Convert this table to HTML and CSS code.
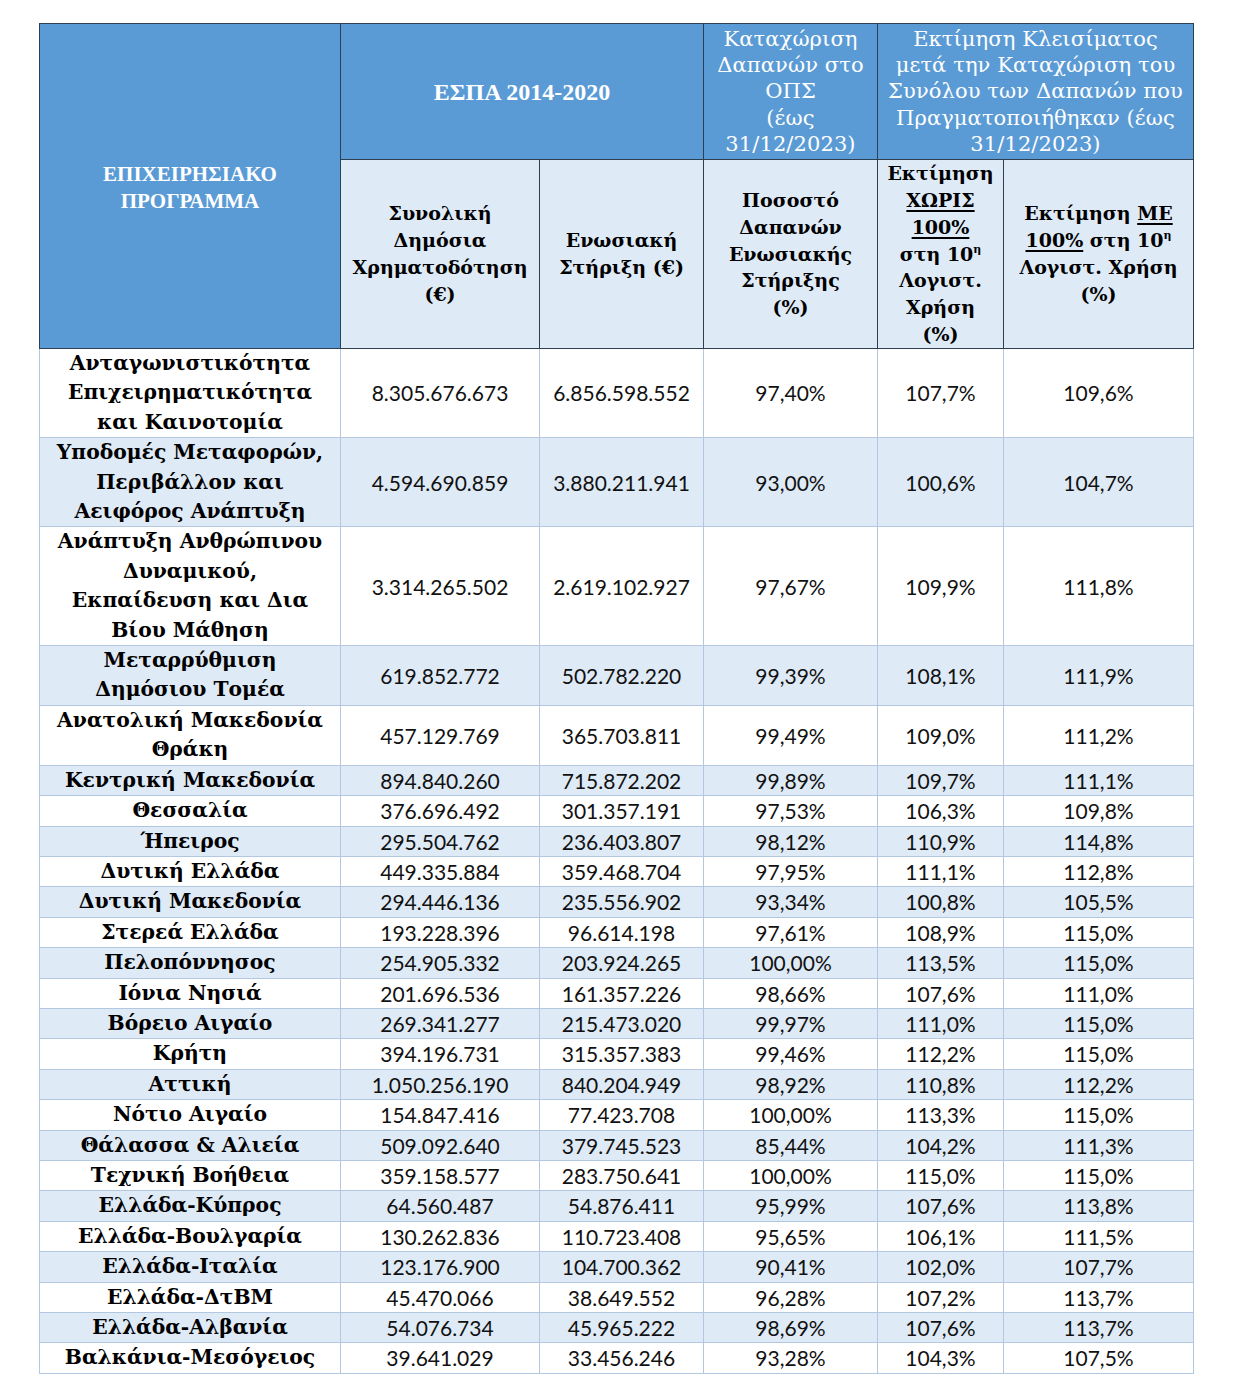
FILE: index.html
```html
<!DOCTYPE html>
<html lang="el">
<head>
<meta charset="utf-8">
<title>ΕΣΠΑ 2014-2020</title>
<link rel="stylesheet" href="styles.css">
</head>
<body>
<table class="grid">
  <colgroup>
    <col class="c1"><col class="c2"><col class="c3"><col class="c4"><col class="c5"><col class="c6">
  </colgroup>
  <thead>
    <tr class="h1">
      <th rowspan="2" class="hd-main times prog">ΕΠΙΧΕΙΡΗΣΙΑΚΟ<br>ΠΡΟΓΡΑΜΜΑ</th>
      <th colspan="2" class="hd-main times espa">ΕΣΠΑ 2014-2020</th>
      <th class="hd-main">Καταχώριση<br>Δαπανών στο<br>ΟΠΣ<br>(έως<br>31/12/2023)</th>
      <th colspan="2" class="hd-main">Εκτίμηση Κλεισίματος<br>μετά την Καταχώριση του<br>Συνόλου των Δαπανών που<br>Πραγματοποιήθηκαν (έως<br>31/12/2023)</th>
    </tr>
    <tr class="h2">
      <th class="hd-sub">Συνολική<br>Δημόσια<br>Χρηματοδότηση<br>(€)</th>
      <th class="hd-sub">Ενωσιακή<br>Στήριξη (€)</th>
      <th class="hd-sub">Ποσοστό<br>Δαπανών<br>Ενωσιακής<br>Στήριξης<br>(%)</th>
      <th class="hd-sub">Εκτίμηση<br><u>ΧΩΡΙΣ</u><br><u>100%</u><br>στη 10<sup>η</sup><br>Λογιστ.<br>Χρήση<br>(%)</th>
      <th class="hd-sub">Εκτίμηση <u>ΜΕ</u><br><u>100%</u> στη 10<sup>η</sup><br>Λογιστ. Χρήση<br>(%)</th>
    </tr>
  </thead>
  <tbody>
    <tr><td class="name">Ανταγωνιστικότητα<br>Επιχειρηματικότητα<br>και Καινοτομία</td><td>8.305.676.673</td><td>6.856.598.552</td><td>97,40%</td><td>107,7%</td><td>109,6%</td></tr>
    <tr class="alt"><td class="name">Υποδομές Μεταφορών,<br>Περιβάλλον και<br>Αειφόρος Ανάπτυξη</td><td>4.594.690.859</td><td>3.880.211.941</td><td>93,00%</td><td>100,6%</td><td>104,7%</td></tr>
    <tr><td class="name">Ανάπτυξη Ανθρώπινου<br>Δυναμικού,<br>Εκπαίδευση και Δια<br>Βίου Μάθηση</td><td>3.314.265.502</td><td>2.619.102.927</td><td>97,67%</td><td>109,9%</td><td>111,8%</td></tr>
    <tr class="alt"><td class="name">Μεταρρύθμιση<br>Δημόσιου Τομέα</td><td>619.852.772</td><td>502.782.220</td><td>99,39%</td><td>108,1%</td><td>111,9%</td></tr>
    <tr><td class="name">Ανατολική Μακεδονία<br>Θράκη</td><td>457.129.769</td><td>365.703.811</td><td>99,49%</td><td>109,0%</td><td>111,2%</td></tr>
    <tr class="alt"><td class="name">Κεντρική Μακεδονία</td><td>894.840.260</td><td>715.872.202</td><td>99,89%</td><td>109,7%</td><td>111,1%</td></tr>
    <tr><td class="name">Θεσσαλία</td><td>376.696.492</td><td>301.357.191</td><td>97,53%</td><td>106,3%</td><td>109,8%</td></tr>
    <tr class="alt"><td class="name">Ήπειρος</td><td>295.504.762</td><td>236.403.807</td><td>98,12%</td><td>110,9%</td><td>114,8%</td></tr>
    <tr><td class="name">Δυτική Ελλάδα</td><td>449.335.884</td><td>359.468.704</td><td>97,95%</td><td>111,1%</td><td>112,8%</td></tr>
    <tr class="alt"><td class="name">Δυτική Μακεδονία</td><td>294.446.136</td><td>235.556.902</td><td>93,34%</td><td>100,8%</td><td>105,5%</td></tr>
    <tr><td class="name">Στερεά Ελλάδα</td><td>193.228.396</td><td>96.614.198</td><td>97,61%</td><td>108,9%</td><td>115,0%</td></tr>
    <tr class="alt"><td class="name">Πελοπόννησος</td><td>254.905.332</td><td>203.924.265</td><td>100,00%</td><td>113,5%</td><td>115,0%</td></tr>
    <tr><td class="name">Ιόνια Νησιά</td><td>201.696.536</td><td>161.357.226</td><td>98,66%</td><td>107,6%</td><td>111,0%</td></tr>
    <tr class="alt"><td class="name">Βόρειο Αιγαίο</td><td>269.341.277</td><td>215.473.020</td><td>99,97%</td><td>111,0%</td><td>115,0%</td></tr>
    <tr><td class="name">Κρήτη</td><td>394.196.731</td><td>315.357.383</td><td>99,46%</td><td>112,2%</td><td>115,0%</td></tr>
    <tr class="alt"><td class="name">Αττική</td><td>1.050.256.190</td><td>840.204.949</td><td>98,92%</td><td>110,8%</td><td>112,2%</td></tr>
    <tr><td class="name">Νότιο Αιγαίο</td><td>154.847.416</td><td>77.423.708</td><td>100,00%</td><td>113,3%</td><td>115,0%</td></tr>
    <tr class="alt"><td class="name">Θάλασσα &amp; Αλιεία</td><td>509.092.640</td><td>379.745.523</td><td>85,44%</td><td>104,2%</td><td>111,3%</td></tr>
    <tr><td class="name">Τεχνική Βοήθεια</td><td>359.158.577</td><td>283.750.641</td><td>100,00%</td><td>115,0%</td><td>115,0%</td></tr>
    <tr class="alt"><td class="name">Ελλάδα-Κύπρος</td><td>64.560.487</td><td>54.876.411</td><td>95,99%</td><td>107,6%</td><td>113,8%</td></tr>
    <tr><td class="name">Ελλάδα-Βουλγαρία</td><td>130.262.836</td><td>110.723.408</td><td>95,65%</td><td>106,1%</td><td>111,5%</td></tr>
    <tr class="alt"><td class="name">Ελλάδα-Ιταλία</td><td>123.176.900</td><td>104.700.362</td><td>90,41%</td><td>102,0%</td><td>107,7%</td></tr>
    <tr><td class="name">Ελλάδα-ΔτΒΜ</td><td>45.470.066</td><td>38.649.552</td><td>96,28%</td><td>107,2%</td><td>113,7%</td></tr>
    <tr class="alt"><td class="name">Ελλάδα-Αλβανία</td><td>54.076.734</td><td>45.965.222</td><td>98,69%</td><td>107,6%</td><td>113,7%</td></tr>
    <tr><td class="name">Βαλκάνια-Μεσόγειος</td><td>39.641.029</td><td>33.456.246</td><td>93,28%</td><td>104,3%</td><td>107,5%</td></tr>
  </tbody>
</table>
</body>
</html>
```

FILE: styles.css
```css
html, body {
  margin: 0;
  padding: 0;
  background: #ffffff;
}

body {
  padding: 23px 0 0 39px;
}

.grid {
  border-collapse: collapse;
  table-layout: fixed;
  width: 1154px;
  color: #000000;
}

.c1 { width: 301px; }
.c2 { width: 199px; }
.c3 { width: 164px; }
.c4 { width: 174px; }
.c5 { width: 126px; }
.c6 { width: 190px; }

.h1 { height: 136px; }
.h2 { height: 189px; }

.grid th {
  padding: 0;
  text-align: center;
  vertical-align: middle;
  white-space: nowrap;
  border: 1px solid #2e3f52;
}

.hd-main {
  background: #5b9bd5;
  color: #ffffff;
  font-family: "DejaVu Serif", serif;
  font-weight: normal;
  font-size: 21px;
  line-height: 26.3px;
  padding-top: 3px;
  padding-bottom: 0;
  letter-spacing: 0.1px;
}

.hd-main.times {
  font-family: "Liberation Serif", serif;
  font-weight: bold;
  font-size: 21px;
  line-height: 27px;
  padding: 0;
  letter-spacing: 0;
}

.hd-main.espa {
  font-size: 24px;
  padding-top: 2px;
}

.hd-main.prog {
  padding-top: 4px;
}

.hd-sub {
  background: #deeaf6;
  color: #000000;
  font-family: "DejaVu Serif", serif;
  font-weight: bold;
  font-size: 19px;
  line-height: 26.8px;
  padding-top: 2px;
}

.hd-sub sup {
  font-size: 11px;
  line-height: 0;
  vertical-align: 8px;
}

.hd-sub u {
  text-decoration-thickness: 2px;
  text-underline-offset: 3px;
}

.grid td {
  padding: 0 2px;
  text-align: center;
  vertical-align: middle;
  white-space: nowrap;
  border: 1px solid #b3c8e0;
  font-family: "Lato", "Liberation Sans", sans-serif;
  font-size: 21px;
  line-height: 29.4px;
  color: #111111;
}

.grid td.name {
  font-family: "DejaVu Serif", serif;
  font-weight: bold;
  font-size: 20.3px;
  color: #000000;
}

.grid tbody tr.alt td {
  background: #deeaf6;
}

.grid thead tr.h2 th {
  border-bottom: 1px solid #2e3f52;
}
```
